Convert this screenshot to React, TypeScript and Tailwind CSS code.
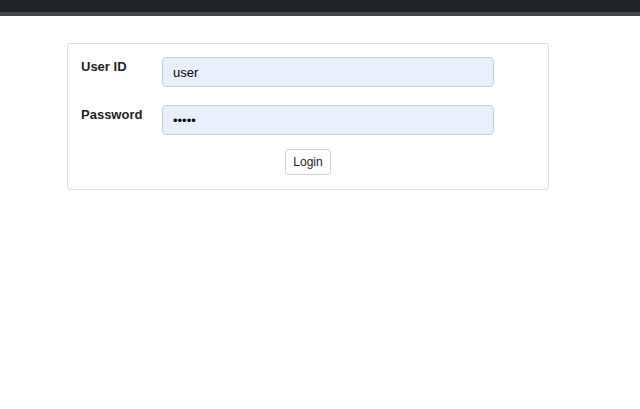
import { useState } from 'react';

const App = () => {
  const [userId, setUserId] = useState('user');
  const [password, setPassword] = useState('12345');

  return (
    <div className="min-h-screen bg-white" style={{ fontFamily: '"Liberation Sans", Arial, sans-serif' }}>
      <div className="h-[16px] bg-[#212529] border-b-4 border-[#454545]" />
      <div className="ml-[67px] mt-[27px] w-[482px] border border-[#dcdcdc] rounded-[3px] px-[13px] pt-[13px] pb-[14px]">
        <div className="flex items-start">
          <label className="w-[81px] text-[13px] font-bold text-[#222]">User ID</label>
          <input
            type="text"
            value={userId}
            onChange={(e) => setUserId(e.target.value)}
            className="w-[332px] h-[30px] px-[10px] bg-[#e8f0fe] border border-[#c8ccd0] rounded-[4px] text-[13px] text-black outline-none"
          />
        </div>
        <div className="flex items-start mt-[18px]">
          <label className="w-[81px] text-[13px] font-bold text-[#222]">Password</label>
          <input
            type="password"
            value={password}
            onChange={(e) => setPassword(e.target.value)}
            className="w-[332px] h-[30px] px-[10px] bg-[#e8f0fe] border border-[#c8ccd0] rounded-[4px] text-[13px] text-black outline-none"
          />
        </div>
        <div className="flex justify-center mt-[14px]">
          <button
            type="button"
            className="w-[46px] h-[26px] bg-white border border-[#cfcfcf] rounded-[3px] text-[12px] text-[#222]"
          >
            Login
          </button>
        </div>
      </div>
    </div>
  );
};

export default App;
